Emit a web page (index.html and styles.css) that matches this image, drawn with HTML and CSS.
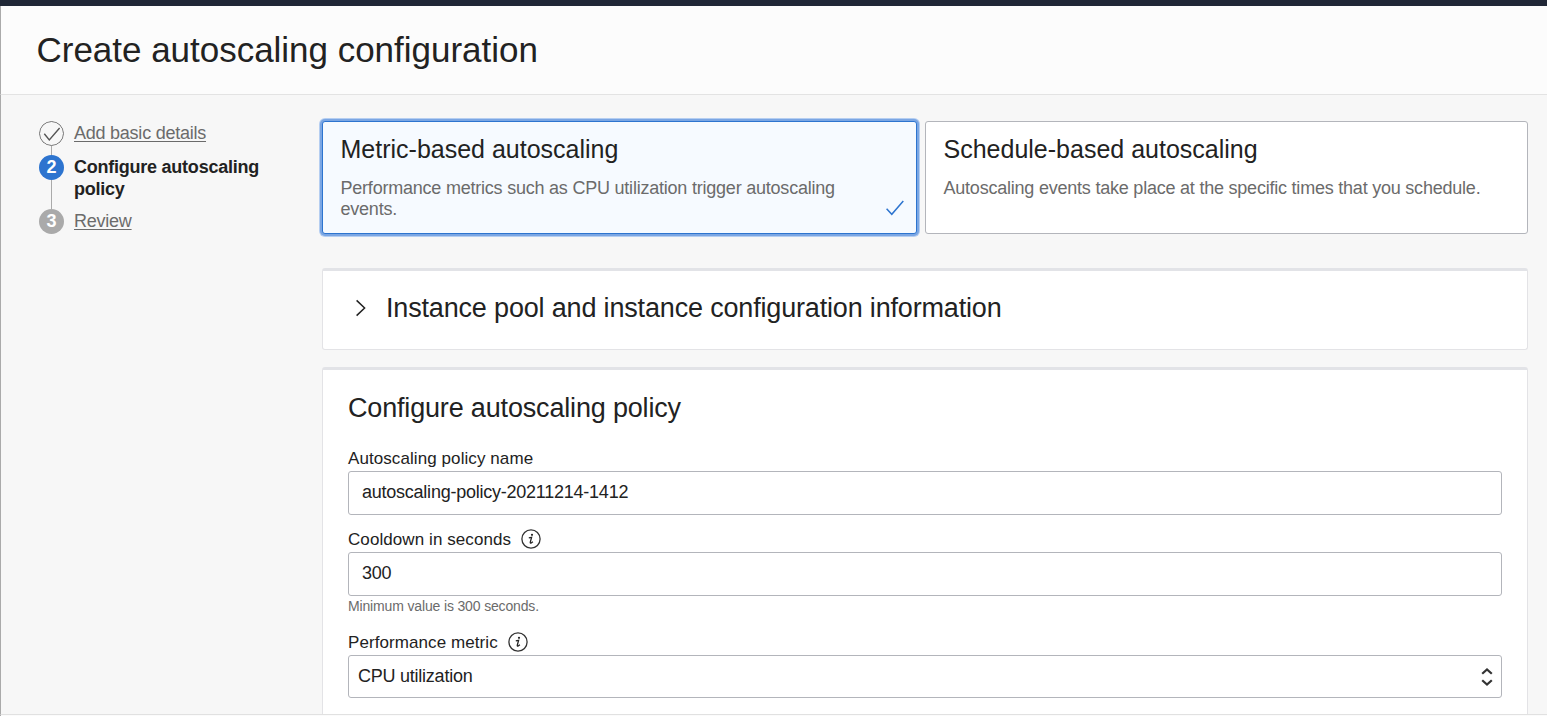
FILE: index.html
```html
<!DOCTYPE html>
<html lang="en">
<head>
<meta charset="utf-8">
<title>Create autoscaling configuration</title>
<link rel="stylesheet" href="styles.css">
</head>
<body>
<div class="page">
  <header class="page-header"><h1>Create autoscaling configuration</h1></header>
  <div class="page-body">
    <nav class="steps">
      <div class="step">
        <svg class="step-icon" width="25" height="25" viewBox="0 0 25 25" fill="none"><circle cx="12.5" cy="12.5" r="12" stroke="#6b6b6b"/><path d="M5.3 12.8 L10.3 19 L20.6 7" stroke="#555" stroke-width="1.4"/></svg>
        <a class="step-link">Add basic details</a>
      </div>
      <div class="step current">
        <span class="step-icon number">2</span>
        <strong class="step-title">Configure autoscaling policy</strong>
      </div>
      <div class="step last">
        <span class="step-icon number muted">3</span>
        <a class="step-link">Review</a>
      </div>
    </nav>
    <main class="content">
      <div class="choices">
        <section class="choice selected">
          <h2>Metric-based autoscaling</h2>
          <p>Performance metrics such as CPU utilization trigger autoscaling events.</p>
          <svg class="choice-check" width="20" height="18" viewBox="0 0 20 18" fill="none"><path d="M1.6 9.7 L6.8 15.3 L18.3 2" stroke="#2d74cf" stroke-width="1.5"/></svg>
        </section>
        <section class="choice">
          <h2>Schedule-based autoscaling</h2>
          <p>Autoscaling events take place at the specific times that you schedule.</p>
        </section>
      </div>
      <section class="panel summary">
        <svg width="12" height="18" viewBox="0 0 12 18" fill="none"><path d="M1.6 1.4 L9.6 9 L1.6 16.6" stroke="#222" stroke-width="1.5"/></svg>
        <h2>Instance pool and instance configuration information</h2>
      </section>
      <section class="panel form">
        <h2>Configure autoscaling policy</h2>
        <label class="label">Autoscaling policy name</label>
        <div class="field">autoscaling-policy-20211214-1412</div>
        <label class="label cooldown"><span>Cooldown in seconds</span>
          <svg class="info" width="20" height="20" viewBox="0 0 20 20"><circle cx="10" cy="10" r="9.1" fill="none" stroke="#333" stroke-width="1.3"/><circle cx="11" cy="5.8" r="1.1" fill="#222"/><path d="M7.8 8.8 L10.6 8.3 L9.3 13.2 Q9.1 14.6 10.2 14 L11.9 12.7" fill="none" stroke="#222" stroke-width="1.3"/></svg>
        </label>
        <div class="field">300</div>
        <p class="hint">Minimum value is 300 seconds.</p>
        <label class="label metric"><span>Performance metric</span>
          <svg class="info" width="20" height="20" viewBox="0 0 20 20"><circle cx="10" cy="10" r="9.1" fill="none" stroke="#333" stroke-width="1.3"/><circle cx="11" cy="5.8" r="1.1" fill="#222"/><path d="M7.8 8.8 L10.6 8.3 L9.3 13.2 Q9.1 14.6 10.2 14 L11.9 12.7" fill="none" stroke="#222" stroke-width="1.3"/></svg>
        </label>
        <div class="field select"><span>CPU utilization</span>
          <svg width="12" height="20" viewBox="0 0 12 20" fill="none"><path d="M1.2 6.8 L6 2.4 L10.8 6.8 M1.2 13.2 L6 17.6 L10.8 13.2" stroke="#333" stroke-width="2.2"/></svg>
        </div>
      </section>
    </main>
  </div>
  <footer class="page-footer"></footer>
</div>
</body>
</html>
```
FILE: styles.css
```css
* { box-sizing: border-box; }
body { margin: 0; font-family: "Liberation Sans", Arial, sans-serif; color: #222; background: #f7f7f7; overflow: hidden; }
h1, h2, p { margin: 0; font-weight: 400; }
svg { display: block; flex: none; }
.page { height: 716px; display: flex; flex-direction: column; border-top: 6px solid #202736; overflow: hidden; }
.page-header { flex: none; height: 89px; padding: 24px 0 0 35.5px; background: #fcfcfc; border-left: 1px solid #aaa; border-bottom: 1px solid #e3e3e3; }
.page-header h1 { font-size: 35px; line-height: 40px; letter-spacing: -0.02px; }
.page-body { flex: 1; min-height: 0; display: flex; overflow: hidden; border-left: 1px solid #aaa; padding: 26px 19px 0 38px; }
.page-footer { flex: none; height: 2px; border-top: 1px solid #e1e1e1; background: #fbfbfb; border-left: 1px solid #aaa; }

.steps { flex: none; width: 283px; font-size: 18px; letter-spacing: -0.24px; line-height: 22px; }
.step { display: flex; gap: 10px; height: 34px; background: linear-gradient(#aaa, #aaa) 12px 0 / 1px 100% no-repeat; }
.step.current { height: 54px; }
.step.last { background: none; }
.step-icon { flex: none; width: 25px; height: 25px; border-radius: 50%; background: #f7f7f7; }
.number { background: #2d74cf; color: #fff; text-align: center; line-height: 25px; letter-spacing: 0; font-weight: 700; }
.number.muted { background: #aaa; }
.step-link { padding-top: 1px; color: #6b6b6b; text-decoration: underline; text-underline-offset: 2px; text-decoration-thickness: 1px; }
.step-title { color: #222; width: 200px; padding-top: 1px; }

.content { flex: 1; min-width: 0; display: flex; flex-direction: column; }
.choices { flex: none; display: grid; grid-template-columns: 595px 603px; gap: 8px; height: 113px; }
.choice { position: relative; background: #fff; border: 1px solid #b3b5bb; border-radius: 3px; padding: 12px 40px 0 17.5px; }
.choice.selected { background: #f6faff; border-color: #2d74cf; box-shadow: 0 0 0 2px #7ba6e3, 0 0 0 3px #b5cef1; }
.choice h2 { font-size: 25px; line-height: 30px; }
.choice p { margin-top: 14px; font-size: 18px; letter-spacing: -0.22px; line-height: 21px; color: #6b6b6b; }
.choice-check { position: absolute; right: 11px; bottom: 16px; }

.panel { flex: none; background: #fff; border: 1px solid #e3e3e6; border-top: 3px solid #e2e3e7; border-radius: 3px; }
.panel h2 { font-size: 27px; letter-spacing: -0.17px; line-height: 32px; }
.summary { display: flex; align-items: center; height: 82px; margin-top: 34px; padding: 0 0 4px 32px; gap: 19px; }
.form { height: 370px; margin-top: 17px; padding: 22px 25px 0; }
.label { display: flex; align-items: center; height: 20px; font-size: 17px; letter-spacing: 0.08px; gap: 10px; }
.panel .label:nth-of-type(1) { margin-top: 25px; margin-bottom: -1px; }
.label span { padding-top: 1px; }
.field { display: flex; align-items: center; height: 44px; margin-top: 3px; padding: 0 13px 2px; border: 1px solid #b3b5bb; border-radius: 3px; font-size: 18px; letter-spacing: -0.24px; }
.panel .cooldown { margin-top: 14px; }
.hint { font-size: 14px; letter-spacing: -0.15px; line-height: 20px; color: #6b6b6b; }
.panel .metric { margin-top: 16px; }
.select { height: 43px; padding: 0 8px 0 9px; justify-content: space-between; }
```
